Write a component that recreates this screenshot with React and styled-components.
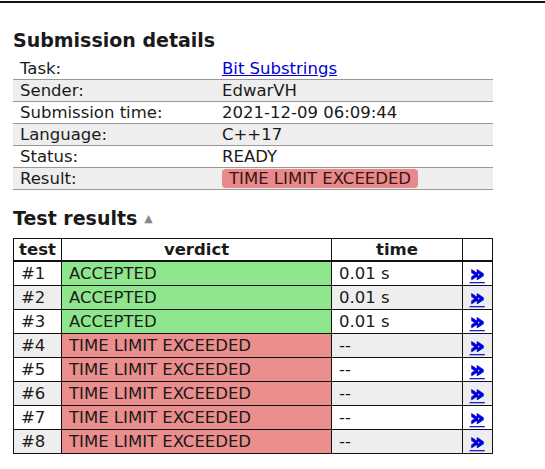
import React from "react"
import styled, { createGlobalStyle } from "styled-components"

const Global = createGlobalStyle`
  body {
    margin: 0;
    background: #fff;
    font-family: "DejaVu Sans", Verdana, sans-serif;
    color: #1a1a1a;
  }
`

const Page = styled.div`
  border-top: 2px solid #111;
  margin-top: 1px;
  padding: 0 13px;
`

const Title = styled.h2`
  font-size: 19px;
  line-height: 23px;
  font-weight: bold;
  margin: ${p => p.$margin || "0"};
  display: flex;
  align-items: center;
  gap: 7px;
`

const Sorter = styled.span`
  font-size: 11px;
  color: #888;
  font-weight: normal;
`

const Details = styled.table`
  width: 480px;
  border-collapse: collapse;
  font-size: 16.5px;
  line-height: 20px;
`

const DRow = styled.tr`
  background: ${p => (p.$odd ? "#eee" : "#fff")};
  border-bottom: 1px solid #999;
`

const DCell = styled.td`
  padding: 0 7px;
  height: 21px;
  width: ${p => p.$w || "auto"};
`

const TaskLink = styled.a`
  color: #0000d6;
  text-decoration: underline;
`

const Badge = styled.span`
  display: inline-block;
  background: #e88a8b;
  border-radius: 4px;
  padding: 0 7px;
  line-height: 19px;
  color: #3a1414;
`

const Results = styled.table`
  width: 480px;
  border-collapse: collapse;
  font-size: 16.5px;
  line-height: 20px;
`

const Th = styled.th`
  border: 1px solid #111;
  border-bottom: 2px solid #111;
  height: 21px;
  padding: 0 5px;
  font-weight: bold;
  text-align: center;
  width: ${p => p.$w || "auto"};
`

const Tr = styled.tr`
  background: ${p => (p.$odd ? "#eee" : "#fff")};
`

const Td = styled.td`
  border: 1px solid #111;
  height: 23px;
  padding: 0 7px;
  background: ${p =>
    p.$verdict === "ok" ? "#8ee68c" : p.$verdict === "tle" ? "#eb8e8e" : "inherit"};
  text-align: ${p => p.$align || "left"};
`

const More = styled.a`
  display: inline-block;
  color: #0000d6;
  font-family: "DejaVu Sans", sans-serif;
  font-weight: 900;
  text-decoration: underline;
  text-decoration-thickness: 1px;
  text-underline-offset: 1px;
  font-size: 19px;
  line-height: 18px;
  height: 19px;
  vertical-align: top;
  -webkit-text-stroke: 0.9px #0000d6;
  transform: scale(1.25, 1.15);
`

const details = [
  ["Task:", <TaskLink href="#">Bit Substrings</TaskLink>],
  ["Sender:", "EdwarVH"],
  ["Submission time:", "2021-12-09 06:09:44"],
  ["Language:", "C++17"],
  ["Status:", "READY"],
  ["Result:", <Badge>TIME LIMIT EXCEEDED</Badge>],
]

const tests = [
  ["ok", "ACCEPTED", "0.01 s"],
  ["ok", "ACCEPTED", "0.01 s"],
  ["ok", "ACCEPTED", "0.01 s"],
  ["tle", "TIME LIMIT EXCEEDED", "--"],
  ["tle", "TIME LIMIT EXCEEDED", "--"],
  ["tle", "TIME LIMIT EXCEEDED", "--"],
  ["tle", "TIME LIMIT EXCEEDED", "--"],
  ["tle", "TIME LIMIT EXCEEDED", "--"],
]

const App = () => (
  <Page>
    <Global />
    <Title $margin="26px 0 6px 0">Submission details</Title>
    <Details>
      <tbody>
        {details.map(([label, value], i) => (
          <DRow key={i} $odd={i % 2 === 1}>
            <DCell $w="188px">{label}</DCell>
            <DCell>{value}</DCell>
          </DRow>
        ))}
      </tbody>
    </Details>
    <Title $margin="17px 0 8px 0">
      Test results <Sorter>▲</Sorter>
    </Title>
    <Results>
      <thead>
        <tr>
          <Th $w="37px">test</Th>
          <Th>verdict</Th>
          <Th $w="120px">time</Th>
          <Th $w="19px"></Th>
        </tr>
      </thead>
      <tbody>
        {tests.map(([v, verdict, time], i) => (
          <Tr key={i} $odd={i % 2 === 1}>
            <Td>#{i + 1}</Td>
            <Td $verdict={v}>{verdict}</Td>
            <Td>{time}</Td>
            <Td $align="center">
              <More href="#">»</More>
            </Td>
          </Tr>
        ))}
      </tbody>
    </Results>
  </Page>
)

export default App
